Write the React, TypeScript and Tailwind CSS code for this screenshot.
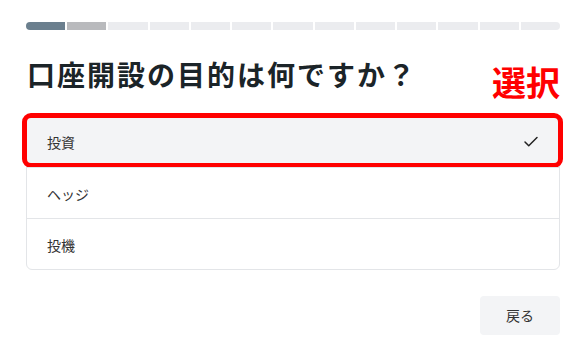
import React from 'react';
import { Check } from 'lucide-react';

const steps = 13;

const options = [
  { label: '投資', selected: true },
  { label: 'ヘッジ', selected: false },
  { label: '投機', selected: false },
];

const segmentColor = (i: number) => {
  if (i === 0) return 'bg-[#6b7f8e]';
  if (i === 1) return 'bg-[#b9babd]';
  return 'bg-[#ebecef]';
};

const App = () => {
  return (
    <div
      className="w-[586px] h-[352px] bg-white px-[26px] pt-[22px]"
      style={{ fontFamily: '"Noto Sans CJK JP", "Noto Sans", sans-serif' }}
    >
      {/* progress */}
      <div className="flex gap-[2px] h-[8px] rounded-full overflow-hidden">
        {Array.from({ length: steps }).map((_, i) => (
          <div key={i} className={`flex-1 ${segmentColor(i)}`} />
        ))}
      </div>

      <div className="flex items-start justify-between mt-[30px]">
        <h1 className="text-[28px] leading-[28px] font-bold tracking-[2px] text-[#1b2428] pl-[1px]">
          口座開設の目的は何ですか？
        </h1>
        <span className="text-[34px] leading-[34px] font-bold text-[#ff0000] mt-[5px]">選択</span>
      </div>

      <div className="mt-[16px] border border-[#e3e5e8] rounded-md">
        {options.map((opt, i) => (
          <div
            key={opt.label}
            className={`relative h-[51px] flex items-center justify-between pl-[20px] pr-[19px] text-[14px] text-[#333] ${
              i > 0 ? 'border-t border-[#e3e5e8]' : ''
            } ${opt.selected ? 'bg-[#f3f4f6] rounded-t-md' : ''}`}
          >
            <span className="pt-[2px]">{opt.label}</span>
            {opt.selected && <Check size={18} strokeWidth={2} className="text-[#222]" />}
            {opt.selected && (
              <div className="absolute -top-[3px] -bottom-[1px] -left-[5px] -right-[4px] border-[5px] border-[#ff0000] rounded-[9px]" />
            )}
          </div>
        ))}
      </div>

      <div className="flex justify-end mt-[26px]">
        <button className="w-[80px] h-[39px] rounded bg-[#f3f4f6] text-[14px] text-[#333]">戻る</button>
      </div>
    </div>
  );
};

export default App;
